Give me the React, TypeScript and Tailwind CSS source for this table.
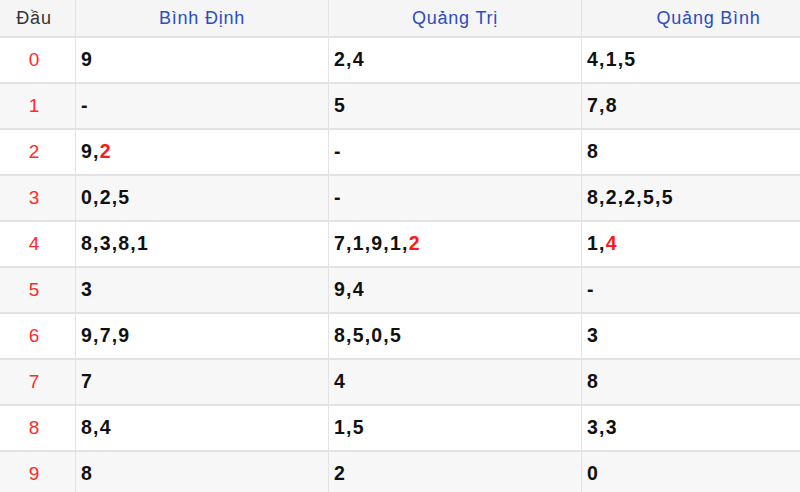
import React from "react";

type Part = { t: string; red?: boolean };
const rows: Part[][][] = [
  [[{ t: "9" }], [{ t: "2,4" }], [{ t: "4,1,5" }]],
  [[{ t: "-" }], [{ t: "5" }], [{ t: "7,8" }]],
  [[{ t: "9," }, { t: "2", red: true }], [{ t: "-" }], [{ t: "8" }]],
  [[{ t: "0,2,5" }], [{ t: "-" }], [{ t: "8,2,2,5,5" }]],
  [[{ t: "8,3,8,1" }], [{ t: "7,1,9,1," }, { t: "2", red: true }], [{ t: "1," }, { t: "4", red: true }]],
  [[{ t: "3" }], [{ t: "9,4" }], [{ t: "-" }]],
  [[{ t: "9,7,9" }], [{ t: "8,5,0,5" }], [{ t: "3" }]],
  [[{ t: "7" }], [{ t: "4" }], [{ t: "8" }]],
  [[{ t: "8,4" }], [{ t: "1,5" }], [{ t: "3,3" }]],
  [[{ t: "8" }], [{ t: "2" }], [{ t: "0" }]],
];

const headers = ["Bình Định", "Quảng Trị", "Quảng Bình"];

export default function App() {
  return (
    <div
      className="w-[800px] h-[492px] overflow-hidden bg-white"
      style={{ fontFamily: '"Liberation Sans", Arial, sans-serif' }}
    >
      <div className="w-[835px]">
        <div className="grid grid-cols-[76px_253px_253px_253px] h-[38px] bg-[#f5f5f5] border-b-2 border-[#e3e3e3]">
          <div className="flex items-center justify-center pr-[7px] pt-px border-r border-[#e3e3e3] text-[18px] tracking-[0.8px] text-[#333]">
            Đầu
          </div>
          {headers.map((h, i) => (
            <div
              key={h}
              className={`flex items-center justify-center pt-px text-[18px] tracking-[0.8px] text-[#2b4cc4] ${
                i < 2 ? "border-r border-[#e3e3e3]" : ""
              }`}
            >
              {h}
            </div>
          ))}
        </div>
        {rows.map((row, r) => (
          <div
            key={r}
            className={`grid grid-cols-[76px_253px_253px_253px] h-[46px] border-b-2 border-[#e3e3e3] ${
              r % 2 === 1 ? "bg-[#f7f7f7]" : "bg-white"
            }`}
          >
            <div className="flex items-center justify-center pr-[7px] border-r border-[#e3e3e3] text-[19px] text-[#ff2a2a]">
              {r}
            </div>
            {row.map((cell, c) => (
              <div
                key={c}
                className={`flex items-center pl-[5px] text-[19.5px] font-bold tracking-[1.2px] text-[#111] ${
                  c < 2 ? "border-r border-[#e3e3e3]" : ""
                }`}
              >
                {cell.map((p, k) => (
                  <span key={k} className={p.red ? "text-[#ff1a1a]" : ""}>
                    {p.t}
                  </span>
                ))}
              </div>
            ))}
          </div>
        ))}
      </div>
    </div>
  );
}
